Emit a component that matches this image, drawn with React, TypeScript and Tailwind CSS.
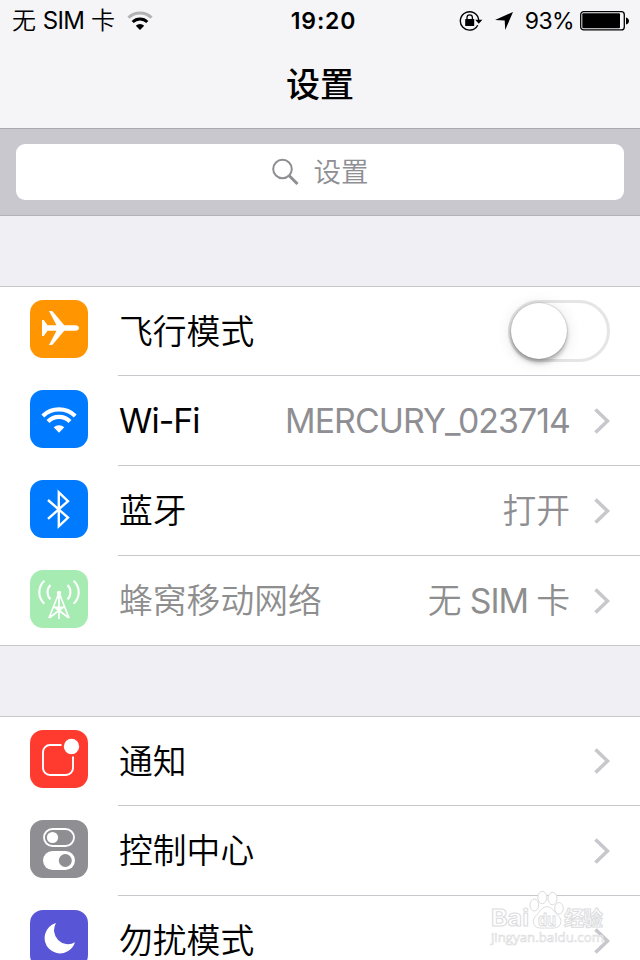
import type { ReactNode } from "react";
import clsx from "clsx";

interface Item { label: string; color: string; icon: ReactNode; value?: string; toggle?: boolean; disabled?: boolean; }

const PlaneIcon = () => (
  <path fill="#fff" d="M12 20h1.800l3.700 5.200h9L19 11h3.300L34.300 25.200H45.500c2 0 3.500 1.200 3.500 2.800s-1.500 2.800-3.500 2.800H34.300L22.300 45H19l7.500-14.200h-9L13.800 36h-1.800z" />
);

const WifiIcon = () => (
  <g fill="none" stroke="#fff" strokeWidth="4.200">
    <path d="M12.800 25.900A23.300 23.300 0 0 1 45.200 25.900" />
    <path d="M18 31.500A15.500 15.500 0 0 1 40 31.500" />
    <path d="M29 42.700l-5.300-5.400a7.600 7.600 0 0 1 10.600 0z" fill="#fff" stroke="none" />
  </g>
);

const BluetoothIcon = () => (
  <path d="M18 20L38 37.600L28.800 46.300V12.400L38 21.100L18 38.800" fill="none" stroke="#fff" strokeWidth="2.400" />
);

const CellularIcon = () => (
  <g fill="none" stroke="#fff" strokeWidth="2.100">
    <path d="M14.400 10.700C7.600 17 7.600 27.400 14.400 33.700M43.600 10.700C50.400 17 50.400 27.400 43.600 33.700" />
    <path d="M20.500 15C16.600 19 16.600 25.300 20.500 29.300M37.500 15C41.400 19 41.400 25.300 37.500 29.300" />
    <path d="M28.500 24L19 48M29.500 24L39 48M29 23V49M24.500 37L38.500 47.700M33.500 37L19.500 47.700M24.300 37.300H33.700" strokeWidth="1.700" />
    <circle cx="29" cy="23" r="2.200" fill="#fff" stroke="none" />
  </g>
);

const NotificationIcon = () => (
  <g fill="none" stroke="#fff" strokeWidth="1.900">
    <path d="M31.500 15H20a7 7 0 0 0-7 7V38a7 7 0 0 0 7 7H36a7 7 0 0 0 7-7V26.500" />
    <circle cx="41.500" cy="16.500" r="7.700" fill="#fff" stroke="none" />
  </g>
);

const ControlIcon = () => (
  <g>
    <rect x="14" y="9" width="30" height="17" rx="8.500" fill="none" stroke="#fff" strokeWidth="1.800" />
    <circle cx="22.500" cy="17.500" r="5.600" fill="#fff" />
    <rect x="13" y="31" width="32" height="19" rx="9.500" fill="#fff" />
    <circle cx="35.300" cy="40.500" r="6.500" fill="#8e8e93" />
  </g>
);

const MoonIcon = () => (
  <path fill="#fff" d="M26 13A15.500 15.500 0 1 0 45 32.300A14 14 0 0 1 26 13z" />
);

const groups: Item[][] = [
  [
    { label: "飞行模式", color: "bg-[#ff9500]", icon: <PlaneIcon />, toggle: true },
    { label: "Wi-Fi", color: "bg-[#007aff]", icon: <WifiIcon />, value: "MERCURY_023714" },
    { label: "蓝牙", color: "bg-[#007aff]", icon: <BluetoothIcon />, value: "打开" },
    { label: "蜂窝移动网络", color: "bg-[#a6ebb1]", icon: <CellularIcon />, value: "无 SIM 卡", disabled: true },
  ],
  [
    { label: "通知", color: "bg-[#ff3b30]", icon: <NotificationIcon /> },
    { label: "控制中心", color: "bg-[#8e8e93]", icon: <ControlIcon /> },
    { label: "勿扰模式", color: "bg-[#5856d6]", icon: <MoonIcon /> },
  ],
];

// CJK runs keep the lighter weight, Latin runs are regular and slightly tighter
function Label({ text }: { text: string }) {
  return (
    <>
      {text.split(/([\w-]+)/).filter(Boolean).map((part, i) => (
        <span key={i} className={/\w/.test(part) ? "font-normal tracking-[-0.027em]" : "font-[350]"}>{part}</span>
      ))}
    </>
  );
}

function StatusBar() {
  return (
    <div className="grid h-[41px] grid-cols-3 items-center pl-3 pr-[11px] text-[23px]">
      <div className="flex items-center">
        <span className="whitespace-nowrap pt-px text-[24px]"><Label text="无 SIM 卡" /></span>
        <svg width="26" height="20" viewBox="0 0 26 20" className="ml-3" fill="none">
          <path d="M1.500 6.700A16.500 16.500 0 0 1 24.500 6.700" stroke="#b2b2b4" strokeWidth="3" />
          <path d="M5.700 11A10.400 10.400 0 0 1 20.300 11" stroke="#000" strokeWidth="3" />
          <path d="M13 19L8.800 14.700a6 6 0 0 1 8.400 0z" fill="#000" />
        </svg>
      </div>
      <div className="pl-1.5 pt-0.5 text-center font-semibold tracking-[0.8px]">19:20</div>
      <div className="flex items-center justify-end">
        <svg width="24" height="22" viewBox="0 0 24 22" fill="none">
          <path d="M18.700 15.200A9.200 9.200 0 1 1 19.700 10" stroke="#000" strokeWidth="1.400" />
          <path d="M16.200 9.800h7.200l-3.600 4z" fill="#000" />
          <rect x="6.200" y="9" width="9" height="7" rx="0.600" fill="#000" />
          <path d="M8 9.500V7.600a2.700 2.700 0 0 1 5.400 0V9.500" stroke="#000" strokeWidth="1.300" />
        </svg>
        <svg width="18" height="18" viewBox="0 0 18 18" className="ml-3">
          <path d="M18 0L10.200 18L9.700 8.500L0 8z" fill="#000" />
        </svg>
        <span className="ml-3 pt-0.5 tracking-[-0.6px]">93%</span>
        <svg width="49" height="20" viewBox="0 0 49 20" className="ml-1.5">
          <rect x="0.700" y="0.700" width="43.600" height="18.200" rx="3" fill="none" stroke="#000" strokeWidth="1.300" />
          <rect x="2.300" y="2.300" width="37.700" height="15" rx="1" fill="#000" />
          <path d="M46 6.500c4 1 4 6 0 7z" fill="#000" />
        </svg>
      </div>
    </div>
  );
}

function Toggle() {
  return (
    <button className="mr-[30px] flex h-[62px] w-[102px] rounded-full border-[3px] border-[#e5e5e5]">
      <span className="h-14 w-14 rounded-full bg-white shadow-[0_4px_4px_rgba(0,0,0,0.25),0_2px_16px_rgba(0,0,0,0.12),0_0_2px_rgba(0,0,0,0.3)]" />
    </button>
  );
}

function Row({ item, first, last }: { item: Item; first: boolean; last: boolean }) {
  return (
    <li className={clsx("flex h-[90px] shrink-0 pl-[30px]", first && "border-t border-[#c8c7cc]", last && "border-b border-[#c8c7cc]")}>
      <div className={clsx("h-[58px] w-[58px] shrink-0 rounded-[13px]", item.color, first ? "mt-[13px]" : "mt-3.5")}>
        <svg width="58" height="58" viewBox="0 0 58 58">{item.icon}</svg>
      </div>
      <div className={clsx("ml-[30px] flex flex-1 items-center text-[33.800px]", !last && "border-b border-[#c8c7cc]", item.disabled && "text-[#8e8e8e]")}>
        <span className="flex-1 pl-px pt-0.5"><Label text={item.label} /></span>
        {item.value && (
          <span className={clsx("pt-0.5 [word-spacing:-1.500px]", item.disabled ? "text-[#8e8e8e]" : "text-[#8e8e93]")}><Label text={item.value} /></span>
        )}
        {item.toggle ? <Toggle /> : (
          <svg width="16" height="26" viewBox="0 0 16 26" className="ml-6 mr-[30px]">
            <path d="M1.500 1.500L13.500 13L1.500 24.500" fill="none" stroke="#c7c7cc" strokeWidth="3.600" />
          </svg>
        )}
      </div>
    </li>
  );
}

function Watermark() {
  return (
    <div className="absolute left-[490px] top-[890px] h-[60px] w-[120px]">
      <svg width="120" height="60" viewBox="0 0 120 60" fill="#fff" stroke="#dcdcde" strokeWidth="1">
        <ellipse cx="44.300" cy="15" rx="4.300" ry="6" />
        <ellipse cx="52.300" cy="7.500" rx="4.500" ry="6.200" />
        <ellipse cx="62.500" cy="8.500" rx="4.500" ry="6.200" />
        <ellipse cx="69" cy="18.300" rx="4.300" ry="5.800" />
        <path d="M57 16.700c-4.500 0-6.500 4-9 6.800-3 3-5.500 5.500-4.500 9.500 1.200 5 5.500 5.500 13.500 5 8 .5 12.500 0 13.700-5 1-4-1.500-6.500-4.500-9.500-2.700-2.800-4.700-6.800-9.200-6.800z" />
        <g fontFamily="Inter, 'Noto Sans CJK SC', sans-serif" fontWeight="700">
          <text x="1" y="36" fontSize="23" textLength="38" lengthAdjust="spacingAndGlyphs">Bai</text>
          <text x="48" y="35.500" fontSize="17" textLength="18" lengthAdjust="spacingAndGlyphs">du</text>
          <text x="74" y="36" fontSize="20" textLength="39">经验</text>
        </g>
        <text x="1" y="51.700" fontSize="12.500" fontFamily="'Open Sans', sans-serif" textLength="113" lengthAdjust="spacingAndGlyphs" strokeWidth="0.600">jingyan.baidu.com</text>
      </svg>
    </div>
  );
}

export default function App() {
  return (
    <div className="relative flex h-[960px] w-[640px] flex-col overflow-hidden bg-[#efeff4] font-[Inter,'Noto_Sans_CJK_SC',sans-serif] text-black">
      <header className="h-[129px] shrink-0 border-b border-[#a9a9ad] bg-[#f5f5f7]">
        <StatusBar />
        <h1 className="flex h-[86px] items-center justify-center text-[34px] font-medium">设置</h1>
      </header>
      <div className="h-[87px] shrink-0 border-b border-[#b3b2b8] bg-[#c9c8ce] px-4 pt-[15px]">
        <div className="flex h-14 items-center justify-center rounded-[9px] bg-white text-[27.500px] font-[350] text-[#8e8e93]">
          <svg width="28" height="28" viewBox="0 0 28 28" fill="none" stroke="#8e8e93" className="mr-3.5">
            <circle cx="10.500" cy="11" r="9.300" strokeWidth="2" />
            <path d="M17 17.500L25.500 26" strokeWidth="3" />
          </svg>
          <span className="pt-0.5">设置</span>
        </div>
      </div>
      {groups.map((items, g) => (
        <ul key={g} className="mt-[70px] shrink-0 bg-white">
          {items.map((item, i) => (
            <Row key={item.label} item={item} first={i === 0} last={i === items.length - 1} />
          ))}
        </ul>
      ))}
      <Watermark />
    </div>
  );
}
